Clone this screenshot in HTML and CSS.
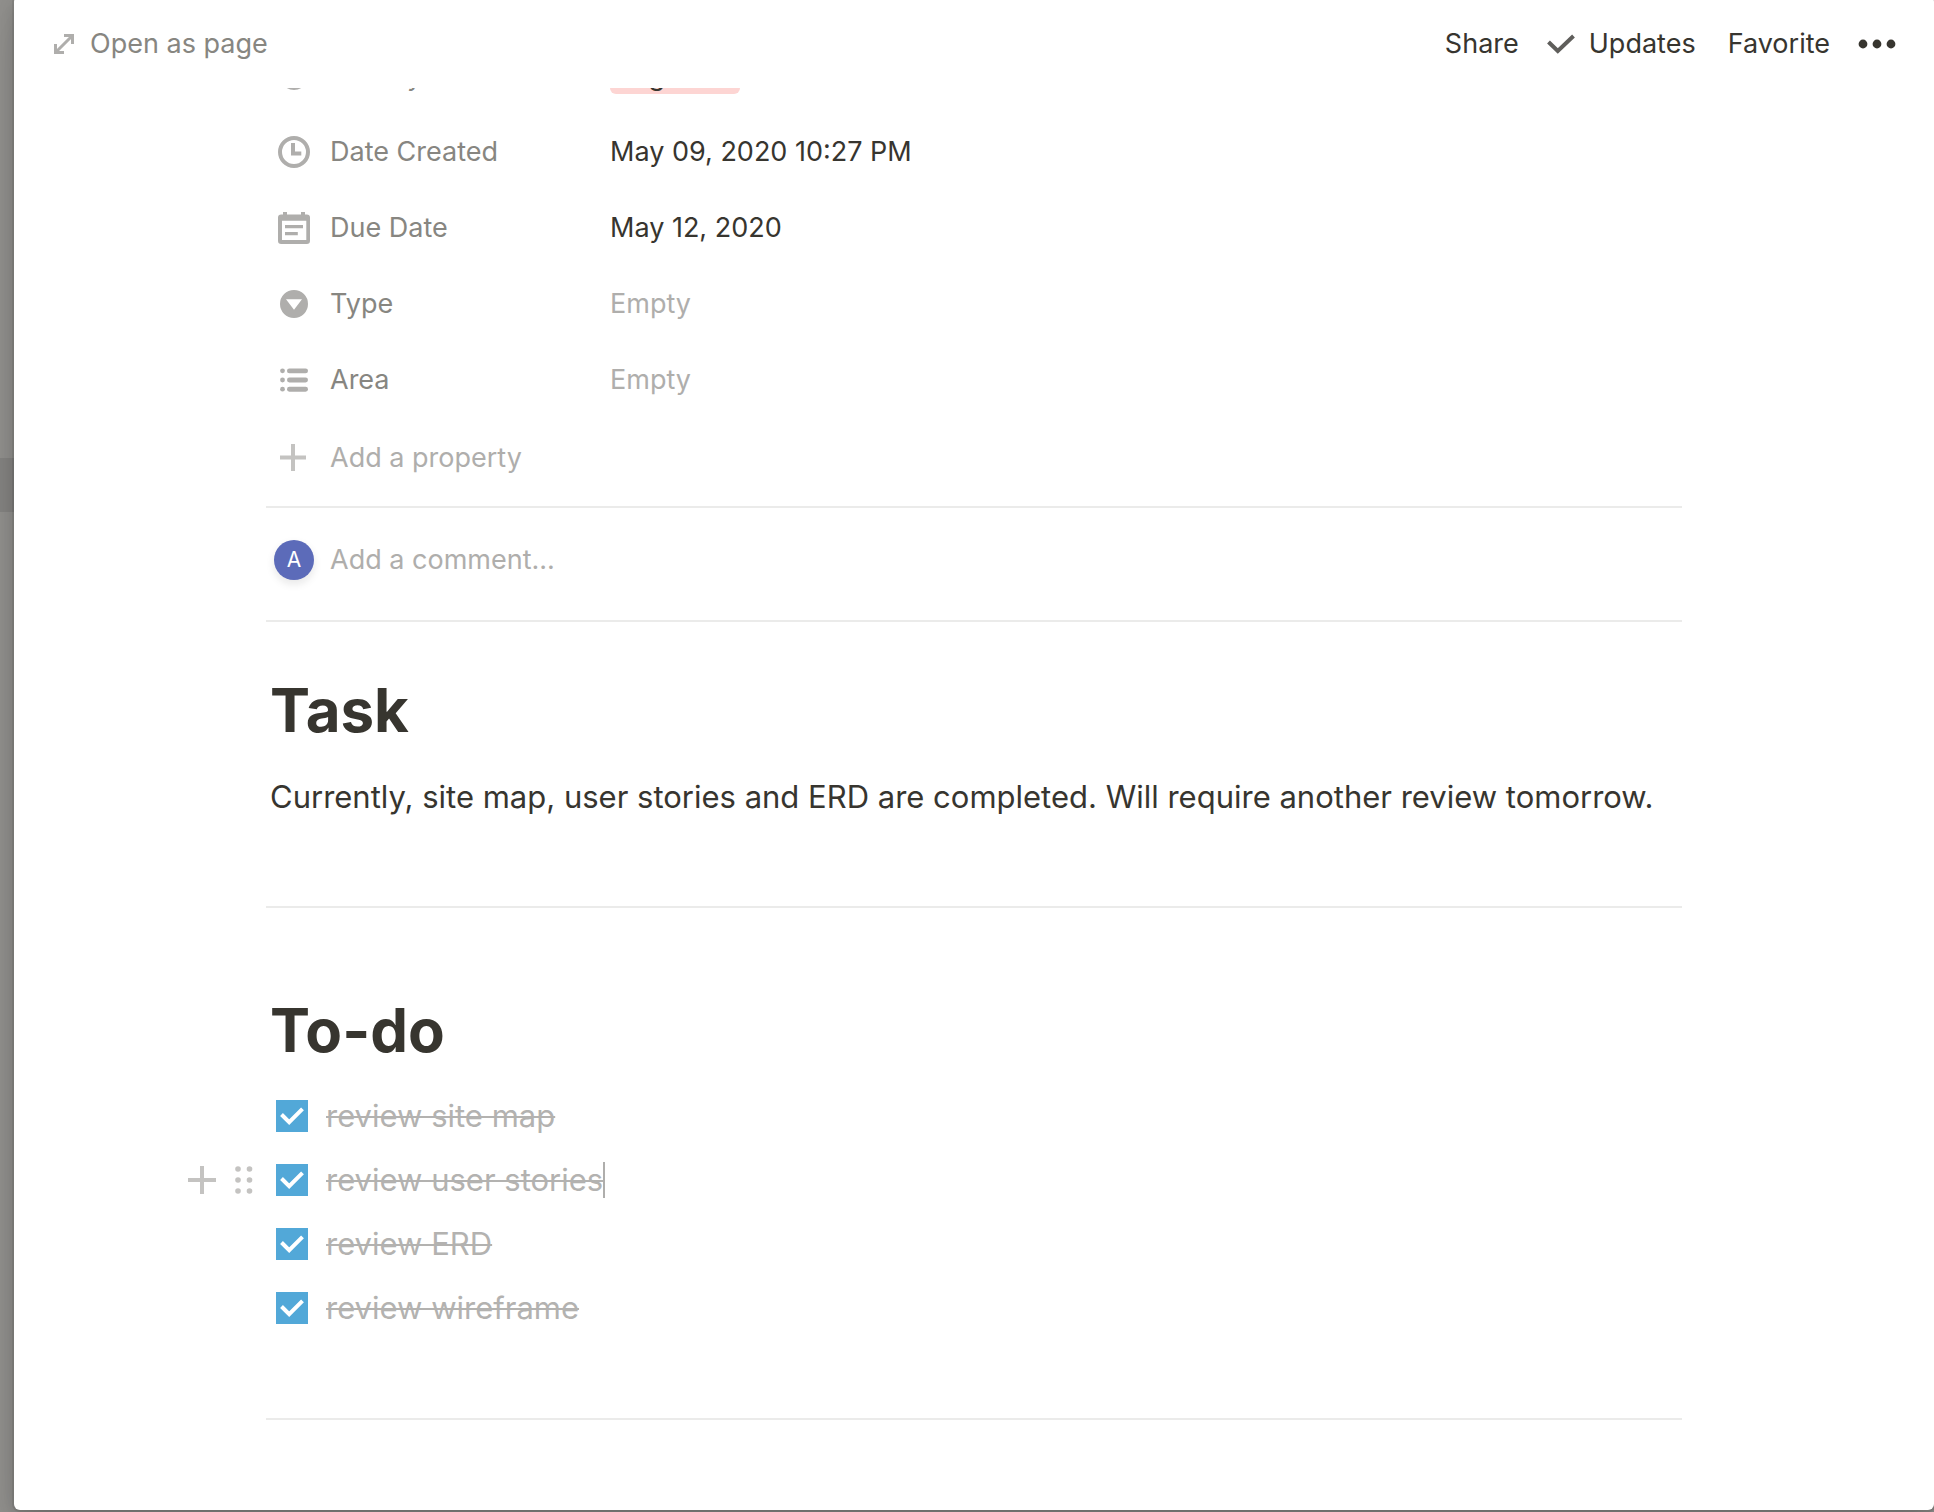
FILE: index.html
```html
<!DOCTYPE html>
<html lang="en">
<head>
<meta charset="utf-8">
<meta name="viewport" content="width=device-width, initial-scale=1">
<title>Task</title>
<link rel="stylesheet" href="styles.css">
</head>
<body>
<div class="backdrop-row"></div>
<main class="peek">
  <header class="topbar">
    <a class="open-link" href="#">
      <svg class="icon-expand" viewBox="0 0 20 20" aria-hidden="true"><path d="M10 1.5h8.500v8.500M1.500 10v8.500H10M17.500 2.500l-15 15"/></svg>
      <span>Open as page</span>
    </a>
    <nav class="actions">
      <button type="button">Share</button>
      <button type="button" class="updates">
        <svg class="icon-tick" viewBox="0 0 28 20" aria-hidden="true"><path d="M1.500 8l9.300 9L26.500 2"/></svg>
        <span>Updates</span>
      </button>
      <button type="button" class="favorite">Favorite</button>
      <button type="button" aria-label="More">
        <svg class="icon-more" viewBox="0 0 38 10" aria-hidden="true"><circle cx="5" cy="5" r="4.400"/><circle cx="19" cy="5" r="4.400"/><circle cx="33" cy="5" r="4.400"/></svg>
      </button>
    </nav>
  </header>

  <div class="scroller">
    <div class="column">
      <dl class="properties">
        <div class="property">
          <dt><span class="glyph"><svg class="icon-28" viewBox="0 0 28 28" aria-hidden="true"><path fill-rule="evenodd" d="M14 0a14 14 0 1 0 0 28a14 14 0 1 0 0-28zM6 9.300h16l-8 10.400z"/></svg></span>Priority</dt>
          <dd><span class="tag">Highest</span></dd>
        </div>
        <div class="property">
          <dt><span class="glyph"><svg class="icon-32" viewBox="0 0 32 32" aria-hidden="true"><path fill-rule="evenodd" d="M16 0a16 16 0 1 0 0 32a16 16 0 1 0 0-32zM16 4a12 12 0 1 1 0 24a12 12 0 1 1 0-24z"/><path d="M13 7h4v8.600h6.300v3.900H13z"/></svg></span>Date Created</dt>
          <dd>May 09, 2020 10:27 PM</dd>
        </div>
        <div class="property">
          <dt><span class="glyph"><svg class="icon-32" viewBox="0 0 32 32" aria-hidden="true"><path fill-rule="evenodd" d="M5 0h4v2.400h14V0h4v2.400h1.800A3.200 3.200 0 0 1 32 5.600v23.200a3.200 3.200 0 0 1-3.200 3.200H3.200A3.200 3.200 0 0 1 0 28.800V5.600a3.200 3.200 0 0 1 3.200-3.200H5zM4 8.800V28h24.300V8.800z"/><path d="M7 13h18v3.300H7zM7 20h12.800v3.200H7z"/></svg></span>Due Date</dt>
          <dd>May 12, 2020</dd>
        </div>
        <div class="property">
          <dt><span class="glyph"><svg class="icon-28" viewBox="0 0 28 28" aria-hidden="true"><path fill-rule="evenodd" d="M14 0a14 14 0 1 0 0 28a14 14 0 1 0 0-28zM6 9.300h16l-8 10.400z"/></svg></span>Type</dt>
          <dd class="empty">Empty</dd>
        </div>
        <div class="property">
          <dt><span class="glyph"><svg class="icon-28" viewBox="0 0 28 28" aria-hidden="true"><circle cx="2.500" cy="4.800" r="2.400"/><circle cx="2.500" cy="14" r="2.400"/><circle cx="2.500" cy="23.200" r="2.400"/><rect x="7" y="2.400" width="21" height="4.900" rx="2.400"/><rect x="7" y="11.600" width="21" height="4.900" rx="2.400"/><rect x="7" y="20.800" width="21" height="4.900" rx="2.400"/></svg></span>Area</dt>
          <dd class="empty">Empty</dd>
        </div>
      </dl>
      <button type="button" class="add-property">
        <span class="glyph"><svg class="icon-plus" viewBox="0 0 28 28" aria-hidden="true"><path d="M13 0v27M0 13.500h26"/></svg></span>
        <span>Add a property</span>
      </button>

      <hr>

      <div class="comment">
        <span class="avatar">A</span>
        <input type="text" placeholder="Add a comment..." aria-label="Add a comment">
      </div>

      <hr>

      <section class="block block-task">
        <h1>Task</h1>
        <p>Currently, site map, user stories and ERD are completed. Will require another review tomorrow.</p>
      </section>

      <hr>

      <section class="block block-todo">
        <h1>To-do</h1>
        <ul class="todos">
          <li>
            <label><span class="check"><input type="checkbox" checked><svg viewBox="0 0 32 32" aria-hidden="true"><path d="M5.500 14.500l7.700 7.700L26.500 8.900"/></svg></span><s>review site map</s></label>
          </li>
          <li>
            <span class="handles">
              <button type="button" aria-label="Add block"><svg class="icon-plus" viewBox="0 0 28 28" aria-hidden="true"><path d="M14 0v28M0 14h28"/></svg></button>
              <button type="button" aria-label="Drag block"><svg class="icon-grip" viewBox="0 0 18 28" aria-hidden="true"><circle cx="3" cy="3" r="2.800"/><circle cx="14.500" cy="3" r="2.800"/><circle cx="3" cy="14" r="2.800"/><circle cx="14.500" cy="14" r="2.800"/><circle cx="3" cy="25" r="2.800"/><circle cx="14.500" cy="25" r="2.800"/></svg></button>
            </span>
            <label><span class="check"><input type="checkbox" checked><svg viewBox="0 0 32 32" aria-hidden="true"><path d="M5.500 14.500l7.700 7.700L26.500 8.900"/></svg></span><s>review user stories</s><span class="caret"></span></label>
          </li>
          <li>
            <label><span class="check"><input type="checkbox" checked><svg viewBox="0 0 32 32" aria-hidden="true"><path d="M5.500 14.500l7.700 7.700L26.500 8.900"/></svg></span><s>review ERD</s></label>
          </li>
          <li>
            <label><span class="check"><input type="checkbox" checked><svg viewBox="0 0 32 32" aria-hidden="true"><path d="M5.500 14.500l7.700 7.700L26.500 8.900"/></svg></span><s>review wireframe</s></label>
          </li>
        </ul>
      </section>

      <hr>
    </div>
  </div>
</main>
</body>
</html>
```
FILE: styles.css
```css
* {
  box-sizing: border-box;
}

body {
  margin: 0;
  height: 100vh;
  padding: 0 0 2px 14px;
  overflow: hidden;
  display: flex;
  background: #92918e;
  color: #37352f;
  font-family: Inter, "Liberation Sans", sans-serif;
  font-size: 27px;
  line-height: 36px;
}

button,
input {
  margin: 0;
  padding: 0;
  border: 0;
  background: none;
  color: inherit;
  font: inherit;
}

svg {
  display: block;
  flex: none;
}

/* Selected row of the page underneath */
.backdrop-row {
  position: absolute;
  left: 0;
  top: 458px;
  width: 14px;
  height: 54px;
  background: #858482;
}

.peek {
  position: relative;
  flex: 1;
  min-width: 0;
  margin-top: -4px;
  padding-top: 4px;
  display: flex;
  flex-direction: column;
  background: #fff;
  border-radius: 6px;
  overflow: hidden;
  box-shadow: 0 0 0 2px rgba(15, 15, 15, 0.08), 0 6px 20px rgba(15, 15, 15, 0.16), 0 18px 48px rgba(15, 15, 15, 0.1);
}

.topbar {
  flex: none;
  height: 88px;
  padding: 0 38px 0 40px;
  display: flex;
  align-items: center;
  justify-content: space-between;
}

.open-link {
  display: flex;
  align-items: center;
  gap: 16px;
  color: #878681;
  text-decoration: none;
}

.icon-expand {
  width: 20px;
  height: 20px;
  fill: none;
  stroke: #afaeac;
  stroke-width: 3;
}

.actions {
  display: flex;
  align-items: center;
}

.updates {
  display: flex;
  align-items: center;
  gap: 14px;
  margin: 0 32px 0 28px;
}

.favorite {
  margin-right: 28px;
}

.icon-tick {
  width: 28px;
  height: 20px;
  fill: none;
  stroke: #5f5e5b;
  stroke-width: 4;
}

.icon-more {
  width: 38px;
  height: 10px;
  fill: #37352f;
}

.scroller {
  flex: 1;
  min-height: 0;
  overflow: hidden;
}

.column {
  margin: 0 252px;
}

/* The list is scrolled partly under the top bar */
.properties {
  margin: -50px 0 0;
}

.property {
  height: 76px;
  display: flex;
  align-items: center;
}

.property dt {
  width: 344px;
  padding-left: 8px;
  display: flex;
  align-items: center;
  gap: 16px;
  color: #878681;
}

.property dd {
  margin: 0;
}

.property .empty {
  color: #afaeac;
}

.glyph {
  flex: none;
  width: 40px;
  display: flex;
  justify-content: center;
}

.icon-28 {
  width: 28px;
  height: 28px;
  fill: #afaeac;
}

.icon-32 {
  width: 32px;
  height: 32px;
  fill: #afaeac;
}

.icon-plus {
  width: 28px;
  height: 28px;
  fill: none;
  stroke: #c4c3c1;
  stroke-width: 4;
}

.tag {
  display: block;
  padding: 0 20px 0 12px;
  border-radius: 6px;
  background: #fdd5d3;
}

.add-property {
  height: 88px;
  padding: 0 0 8px 8px;
  display: flex;
  align-items: center;
  gap: 16px;
  color: #afaeac;
}

hr {
  height: 2px;
  margin: 0;
  border: 0;
  background: #ebebea;
}

.comment {
  height: 112px;
  padding: 0 8px 8px;
  display: flex;
  align-items: center;
  gap: 16px;
}

.comment input {
  flex: 1;
  min-width: 0;
  outline: 0;
}

.comment input::placeholder {
  color: #afaeac;
  opacity: 1;
}

.avatar {
  width: 40px;
  height: 40px;
  border-radius: 50%;
  background: #5c6bb9;
  box-shadow: 0 4px 8px rgba(15, 15, 15, 0.1);
  color: #fff;
  font-size: 21px;
  line-height: 40px;
  text-align: center;
}

.block {
  padding: 0 4px;
  font-size: 31px;
  line-height: 48px;
}

.block-task {
  height: 284px;
  padding-top: 52px;
}

.block-todo {
  height: 510px;
  padding-top: 86px;
}

.block h1 {
  margin: 0;
  font-size: 60px;
  font-weight: 700;
  line-height: 72px;
}

.block p {
  margin: 27px 0 0;
}

.todos {
  margin: 18px 0 0;
  padding: 0 6px;
  list-style: none;
}

.todos li {
  height: 64px;
  display: flex;
  align-items: center;
}

.todos label {
  display: flex;
  align-items: center;
}

.todos s {
  color: #b3b2b0;
  text-decoration-thickness: 2px;
}

.check {
  display: grid;
  margin-right: 18px;
}

.check input,
.check svg {
  grid-area: 1 / 1;
  width: 32px;
  height: 32px;
}

.check input {
  appearance: none;
  background: #52a8d8;
}

.check svg {
  fill: none;
  stroke: #fff;
  stroke-width: 4;
  pointer-events: none;
}

.caret {
  width: 2px;
  height: 36px;
  background: #afaeac;
}

.handles {
  width: 88px;
  margin-left: -88px;
  display: flex;
  align-items: center;
  gap: 19px;
}

.icon-grip {
  width: 18px;
  height: 28px;
  fill: #c4c3c1;
}
```
